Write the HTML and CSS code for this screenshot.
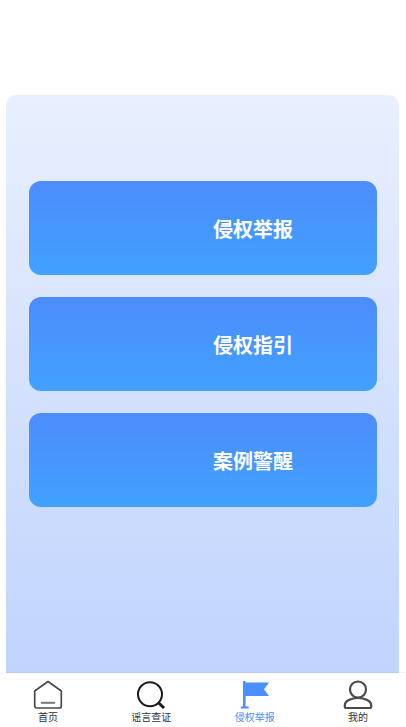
FILE: index.html
```html
<!DOCTYPE html>
<html lang="zh">
<head>
<meta charset="utf-8">
<title>侵权举报</title>
<link rel="stylesheet" href="styles.css">
</head>
<body>
<div class="page">
  <main class="panel">
    <a class="action">侵权举报</a>
    <a class="action">侵权指引</a>
    <a class="action">案例警醒</a>
  </main>
  <nav class="tabbar">
    <a class="tab">
      <svg class="icon" viewBox="0 0 30 30"><path class="line-grey" d="M1.700 11 15 1.500 28.300 11v15a2 2 0 0 1-2 2H3.700a2 2 0 0 1-2-2z"/><path class="dash" d="M8 22.800h14"/></svg>
      <span>首页</span>
    </a>
    <a class="tab">
      <svg class="icon" viewBox="0 0 30 30"><circle class="line-dark" cx="14" cy="14.200" r="12"/><path class="line-dark thick" d="m22.800 23 5.200 5"/></svg>
      <span>谣言查证</span>
    </a>
    <a class="tab active">
      <svg class="icon" viewBox="0 0 30 30"><path class="flag" d="M3 1h2.600v1.500h23.400L24 9.200l5 6.800H5.600v10.400h3V28.500H.8v-2.100H3z"/></svg>
      <span>侵权举报</span>
    </a>
    <a class="tab">
      <svg class="icon" viewBox="0 0 30 30"><circle class="line-grey heavy" cx="15" cy="9.500" r="8"/><path class="line-grey heavy" d="M1.800 27v-1.500C1.800 21 8 18 15 18s13.200 3 13.200 7.500V27a1 1 0 0 1-1 1H2.800a1 1 0 0 1-1-1z"/></svg>
      <span>我的</span>
    </a>
  </nav>
</div>
</body>
</html>
```
FILE: styles.css
```css
* { box-sizing: border-box; }
html, body { margin: 0; padding: 0; background: #fff; }
body { font-family: "Noto Sans CJK SC", "Noto Sans", sans-serif; }
.page { width: 406px; height: 727px; display: flex; flex-direction: column; padding-top: 95px; overflow: hidden; }
.panel {
  flex: 0 0 578px;
  margin: 0 7px 0 6px;
  padding: 86px 22px 0 23px;
  border-radius: 10px 10px 0 0;
  background: linear-gradient(180deg, #e9effd 0%, #c0d4fe 100%);
  display: flex;
  flex-direction: column;
  gap: 22px;
}
.action {
  height: 94px;
  padding-left: 184px;
  border-radius: 12px;
  background: linear-gradient(180deg, #4d8cfc 0%, #41a1ff 100%);
  color: #fff;
  font-size: 20px;
  font-weight: 700;
  display: flex;
  align-items: center;
}
.tabbar {
  flex: 1;
  padding: 7px 8px 0;
  display: flex;
  justify-content: space-between;
  background: #fff;
  box-shadow: 0 -1px 1px rgba(0, 0, 0, 0.04);
}
.tab { width: 80px; display: flex; flex-direction: column; align-items: center; color: #333; font-size: 10px; line-height: 14px; }
.tab.active { color: #4a8cfd; }
.icon { width: 30px; height: 30px; display: block; }
.line-grey, .line-dark { fill: none; stroke-width: 1.700; stroke-linejoin: round; }
.line-grey { stroke: #4a4a4a; }
.line-grey.heavy { stroke-width: 2.200; }
.line-dark { stroke: #1a1a1a; stroke-width: 2; }
.line-dark.thick { stroke-width: 3; }
.dash { fill: none; stroke: #777; stroke-width: 2; }
.flag { fill: #4a8ffd; }
```
